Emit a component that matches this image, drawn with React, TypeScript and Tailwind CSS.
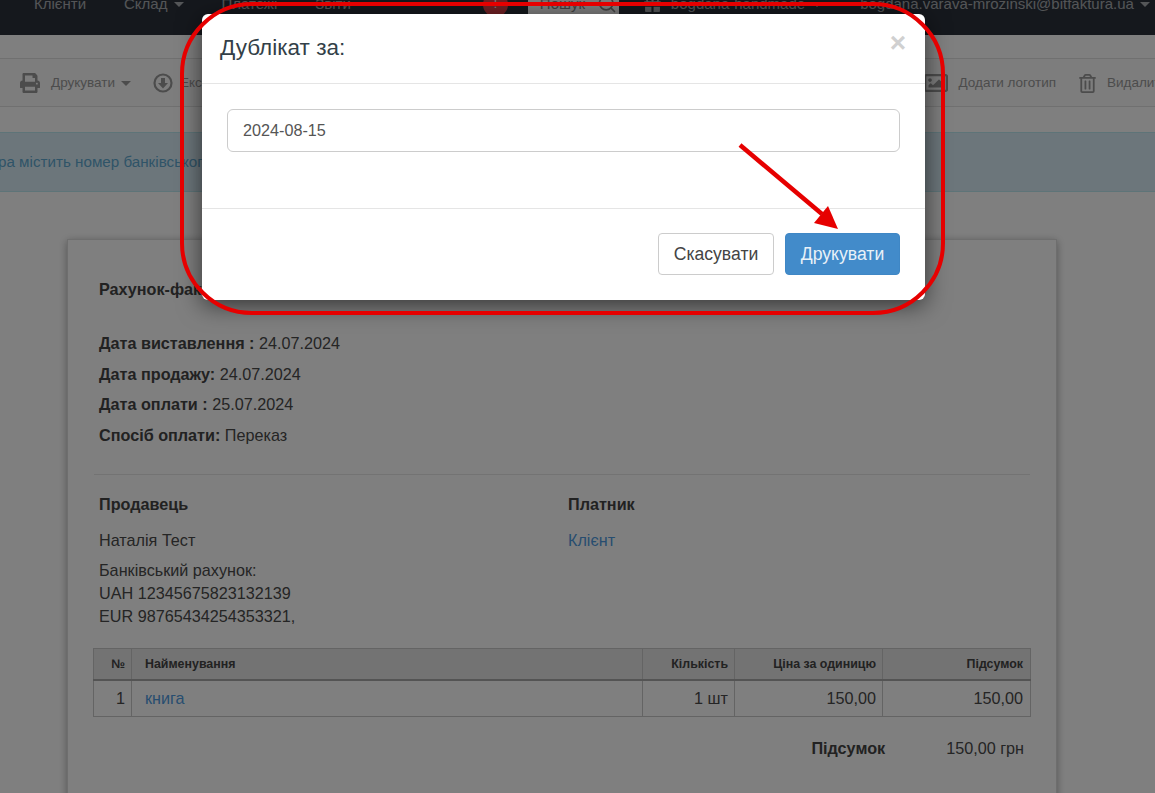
import { FaPrint, FaRegImage, FaRegTrashAlt, FaGift } from 'react-icons/fa'
import { Search } from 'lucide-react'

const Caret = ({ className = '' }: { className?: string }) => (
  <span className={`inline-block border-x-[5px] border-t-[5px] border-x-transparent ${className}`} />
)

function Nav() {
  return (
    <div className="h-[35px] overflow-hidden bg-[#2a313b] text-[15px] text-[#ffffff]/60">
      <div className="-mt-[11px] flex h-[30px] items-center whitespace-nowrap pl-[34px]">
        <span>Клієнти</span>
        <span className="ml-[38px]">Склад</span>
        <Caret className="ml-[7px] border-t-white/60" />
        <span className="ml-[37px]">Платежі</span>
        <span className="ml-[38px]">Звіти</span>
        <span className="ml-[132px] flex h-[25px] w-[25px] items-center justify-center rounded-full bg-[#e4434b] text-xs text-white">!</span>
        <div className="ml-[20px] flex h-[30px] w-[91px] items-center justify-between bg-white pl-[12px] pr-[2px] text-[#888888]">
          <span>Пошук</span>
          <Search size={20} className="text-[#888888]" />
        </div>
        <FaGift size={17} className="ml-[25px]" />
        <span className="ml-[10px]">bogdana-handmade</span>
        <Caret className="ml-[7px] border-t-white/60" />
        <span className="ml-[38px]">bogdana.varava-mrozinski@bitfaktura.ua</span>
        <Caret className="ml-[6px] border-t-white/60" />
      </div>
    </div>
  )
}

function Toolbar() {
  return (
    <div className="mt-[23px] flex h-[49px] items-center justify-between overflow-hidden whitespace-nowrap border-y border-[#e0e0e0] bg-[#fafafa] pl-[20px] pt-[1px] text-[13.5px] text-[#999999]">
      <div className="flex items-center">
        <FaPrint size={20} className="text-[#999999]" />
        <span className="ml-[11px]">Друкувати</span>
        <Caret className="ml-[6px] border-t-[#999999]" />
        <svg viewBox="0 0 20 20" className="ml-[22px] h-[20px] w-[20px]">
          <circle cx="10" cy="10" r="8.5" fill="none" stroke="#999999" strokeWidth="2.2" />
          <path d="M8 5h4v5h3l-5 5.5L5 10h3z" fill="#999999" />
        </svg>
        <span className="ml-[7px]">Експорт</span>
      </div>
      <div className="mr-[-10px] flex items-center">
        <FaRegImage size={24} className="text-[#999999]" />
        <span className="ml-[11px]">Додати логотип</span>
        <FaRegTrashAlt size={19} className="ml-[22px] text-[#999999]" />
        <span className="ml-[10px] w-[58px] overflow-hidden">Видалити</span>
      </div>
    </div>
  )
}

function Alert() {
  return (
    <div className="mt-[25px] flex h-[60px] items-center overflow-hidden whitespace-nowrap border-y border-[#bce8f1] bg-[#d9edf7] pt-[1px] text-[15.2px] text-[#5fa8d0]">
      <span className="-ml-[2px]">ра містить номер банківського рахунку</span>
    </div>
  )
}

function Invoice() {
  const dates = [
    ['Дата виставлення :', '24.07.2024'],
    ['Дата продажу:', '24.07.2024'],
    ['Дата оплати :', '25.07.2024'],
    ['Спосіб оплати:', 'Переказ'],
  ]
  return (
    <div className="ml-[67px] mt-[47px] h-[700px] w-[990px] border border-[#dddddd] bg-white px-[26px] pt-[38px] text-[16.2px] leading-[22.86px] text-[#4a4a4a] shadow-[0_2px_8px_rgba(0,0,0,0.35)]">
      <div className="px-[5px] font-bold text-[#444444]">Рахунок-фактура</div>
      <div className="mt-[31px] flex flex-col gap-[7.8px] px-[5px]">
        {dates.map(([label, value]) => (
          <div key={label}>
            <b className="text-[#444444]">{label}</b> {value}
          </div>
        ))}
      </div>
      <div className="mt-[27px] border-t border-[#e6e6e6]" />
      <div className="grid grid-cols-[469px_1fr] px-[5px] pt-[18px]">
        <div>
          <b className="text-[#444444]">Продавець</b>
          <div className="mt-[13px]">Наталія Тест</div>
          <div className="mt-[8px]">Банківський рахунок:</div>
          <div>UAH 12345675823132139</div>
          <div>EUR 98765434254353321,</div>
        </div>
        <div>
          <b className="text-[#444444]">Платник</b>
          <div className="mt-[13px] text-[#4f9be0]">Клієнт</div>
        </div>
      </div>
      <table className="-ml-px mt-[20px] w-[937px] table-fixed border-collapse border border-[#c8c8c8]">
        <colgroup>
          <col className="w-[38px]" />
          <col className="w-[511px]" />
          <col className="w-[92px]" />
          <col className="w-[148px]" />
          <col className="w-[148px]" />
        </colgroup>
        <thead>
          <tr className="h-[32px] border-b-2 border-[#a8a8a8] bg-[#e6e6e6] text-[12.4px] font-bold text-[#444444]">
            <th className="border border-[#c8c8c8] px-[6px] text-right">№</th>
            <th className="border border-[#c8c8c8] px-[13px] text-left">Найменування</th>
            <th className="border border-[#c8c8c8] px-[6px] text-right">Кількість</th>
            <th className="border border-[#c8c8c8] px-[6px] text-right">Ціна за одиницю</th>
            <th className="border border-[#c8c8c8] px-[7px] text-right">Підсумок</th>
          </tr>
        </thead>
        <tbody>
          <tr className="h-[36px]">
            <td className="border border-[#c8c8c8] px-[6px] text-right">1</td>
            <td className="border border-[#c8c8c8] px-[13px] text-[#4f9be0]">книга</td>
            <td className="border border-[#c8c8c8] px-[6px] text-right">1 шт</td>
            <td className="border border-[#c8c8c8] px-[6px] text-right">150,00</td>
            <td className="border border-[#c8c8c8] px-[7px] text-right">150,00</td>
          </tr>
        </tbody>
      </table>
      <div className="mr-[6px] mt-[20px] flex justify-end">
        <b className="text-[#444444]">Підсумок</b>
        <span className="ml-[61px]">150,00 грн</span>
      </div>
    </div>
  )
}

function Modal() {
  return (
    <div className="absolute left-[202px] top-[14px] w-[723px] rounded-[6px] bg-white shadow-[0_5px_25px_rgba(0,0,0,0.6)]">
      <div className="flex h-[70px] items-center justify-between border-b border-[#e5e5e5] pl-[18px] pr-[19px]">
        <h4 className="-mt-[1px] text-[22.5px] text-[#333f48]">Дублікат за:</h4>
        <span className="-mt-[11px] text-[28px] font-bold text-[#d0d0d0]">×</span>
      </div>
      <div className="h-[124px] px-[25px] pt-[25px]">
        <input
          readOnly
          value="2024-08-15"
          className="h-[43px] w-full rounded-[6px] border border-[#cccccc] px-[15px] text-[16.2px] text-[#555555] outline-none"
        />
      </div>
      <div className="flex h-[92px] items-start justify-end gap-[11px] border-t border-[#e5e5e5] pr-[25px] pt-[24px] text-[17.6px]">
        <button className="h-[42px] w-[116px] rounded-[4px] border border-[#cccccc] bg-white text-[#444444]">Скасувати</button>
        <button className="h-[42px] w-[115px] rounded-[4px] border border-[#3f87c5] bg-[#428bca] text-[#e8f1f8]">Друкувати</button>
      </div>
    </div>
  )
}

export default function App() {
  return (
    <div className="relative h-[793px] w-[1155px] overflow-hidden bg-white font-['Liberation_Sans',Arial,sans-serif]">
      <Nav />
      <Toolbar />
      <Alert />
      <Invoice />
      <div className="absolute inset-0 bg-black/50" />
      <Modal />
      {/* annotation on top of the screenshot */}
      <div className="absolute left-[180px] top-[2px] h-[313px] w-[765px] rounded-[72px] border-[4px] border-[#e60000]" />
      <svg className="absolute inset-0 h-[793px] w-[1155px]" viewBox="0 0 1155 793">
        <path d="M740 145L822 214" stroke="#e60000" strokeWidth="4.5" fill="none" />
        <path d="M838 229L828 206L814 223Z" fill="#e60000" />
      </svg>
    </div>
  )
}
